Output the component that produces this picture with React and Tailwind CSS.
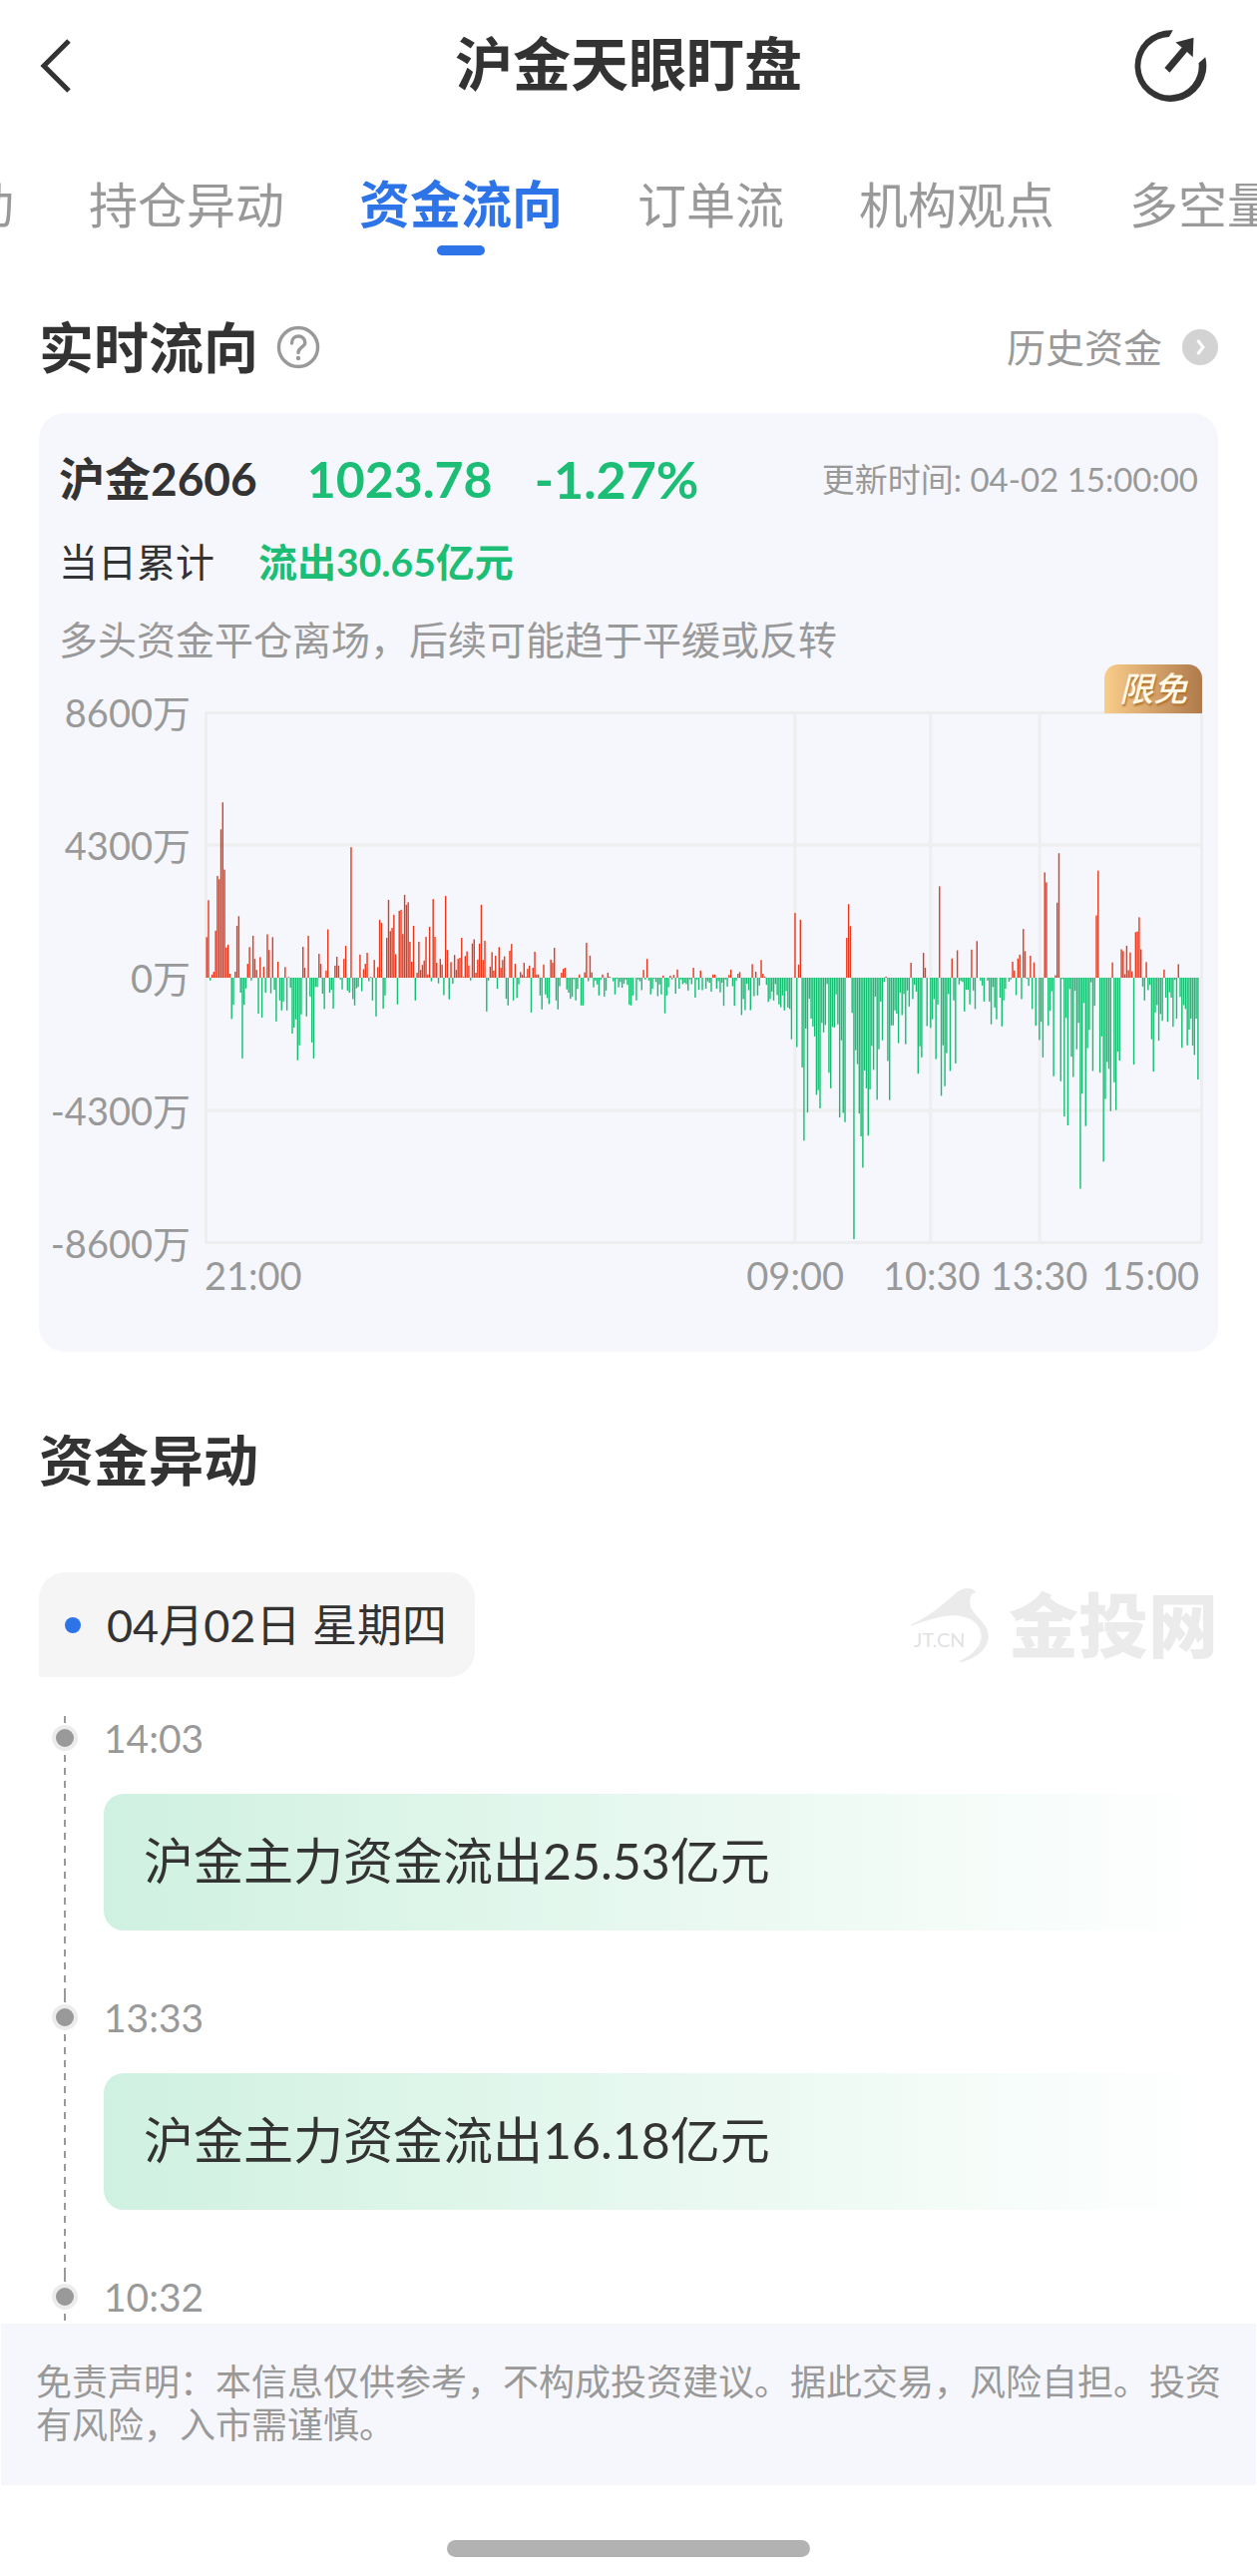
import { useState } from "react"

const tabs = ["异动", "持仓异动", "资金流向", "订单流", "机构观点", "多空量"]

const yLabels = ["8600万", "4300万", "0万", "-4300万", "-8600万"]

const events = [
  { time: "14:03", text: "沪金主力资金流出25.53亿元" },
  { time: "13:33", text: "沪金主力资金流出16.18亿元" },
  { time: "10:32", text: "" }
]

// Net flow per minute, +-746 is the full scale (8600万)
const FULL = 746
const flow = [
  114, 218, -8, 9, 17, 132, 286, 277, 417, 493, 304, 85, 93, 11, -116, -76, 17, 146, 173, -42,
  -227, -76, -30, 39, 86, -8, 118, 53, 22, -101, 58, -112, 31, -42, 122, 78, -44, 114, -34, -123,
  45, -64, -92, -67, 30, -92, 2, -28, -157, -140, -117, -232, -190, -103, 87, 28, -109, 118, -53, -182,
  -227, -26, -26, 67, 39, -45, -88, 20, 136, -42, -34, -87, 34, 59, 34, -5, -33, 53, 90, -36,
  -42, 367, -60, -78, -30, -26, 65, -38, 24, 39, 70, -10, 2, -64, 50, -109, 30, 163, 154, -87,
  -50, 112, 219, 131, 140, 177, 66, -75, 188, 191, 123, 233, 205, 212, 101, 45, 146, -64, 14, 101,
  22, 36, 48, 115, 9, 143, -10, 221, 115, 42, -16, 53, 37, -49, 230, 78, -61, 44, -17, 64,
  22, 53, 56, 112, 2, 61, 74, 34, -8, 96, 108, 14, 51, 96, 205, 50, 104, -95, -8, 31,
  72, 20, 62, -31, 86, 28, 50, 60, -59, -78, 76, 95, -64, 39, -57, -19, 16, 8, 42, 2,
  25, 34, -98, 28, 73, 9, 9, -50, -89, 37, -47, -57, -74, 51, 42, 84, -64, -89, -24, 14,
  25, 28, -33, -42, -59, -53, -4, -64, -31, 9, -78, -78, 15, 98, -10, 62, 15, -27, -8, -19,
  -50, -6, 9, -53, -36, 14, 3, 0, -10, -47, -3, -27, -12, -28, -17, -6, -20, -76, -78, -50,
  0, -64, -5, -10, -35, 22, -5, 53, -8, -47, -31, -3, -12, -52, -19, -47, 6, -100, -50, -27,
  6, -5, 8, -45, 23, -31, -5, -18, -14, -18, -36, -5, -18, 28, -56, -5, -34, 20, -35, 0,
  -31, -10, -14, -39, 9, 9, -31, -10, -41, -14, -79, -5, -25, 8, 23, -24, -79, -8, 11, 16,
  -105, -60, -91, -17, -35, -91, 38, -52, 17, -50, -22, 50, 11, 3, -20, -68, -60, -39, -64, -18,
  -49, -75, -83, -50, -92, -38, -84, -88, -173, 0, 182, -195, 37, 163, -252, -458, -143, -379, -59, -115,
  -137, -165, -329, -316, -367, -127, -154, -133, -18, -267, -311, -138, -140, -47, -131, -393, -176, -380, -406, 112,
  207, 145, -99, -735, -204, -243, -382, -446, -534, -261, -311, -444, -314, -192, -259, -53, -343, -201, -67, -176,
  -12, 3, -234, -344, -134, -134, -92, -101, -184, -42, -105, -46, -187, -36, -81, 42, -60, -20, -39, -270,
  -193, -224, 70, 28, -136, 0, -141, -117, -60, -229, -76, 257, -332, -190, -305, -212, -46, -262, 54, -64,
  -241, 77, -19, -9, -12, -95, -34, -34, -75, 79, -36, -88, 103, 0, -8, -22, -67, 0, -8, -67,
  -131, -26, -84, -117, 0, -56, -137, -64, -31, 0, -11, -5, 45, 20, -49, 54, 65, -60, 137, 75,
  -3, -23, 62, -88, 43, -135, 0, -175, -124, -224, 296, 268, -135, -93, -38, -277, 7, 211, 350, -291,
  -4, -390, -113, -415, -32, -222, -279, -37, -201, -127, -593, -326, -71, -417, -198, -147, -13, -262, -79, 175,
  301, -267, -165, -517, -341, -237, -256, -375, 43, -294, -372, -208, -233, 80, 75, 10, 90, 21, 71, 18,
  -244, 128, 130, 170, 80, -25, -64, 44, -35, -20, -173, -264, -98, -77, -177, -102, -121, 23, -56, -124,
  -41, -56, -138, -6, -115, 38, -54, -197, -77, -88, -190, -146, -115, -191, -217, -115, -286
]

function FlowChart() {

  const step = 1.789

  return (
    <svg
      viewBox="0 0 1002 534"
      preserveAspectRatio="none"
      className="block w-full h-[534px]"
      role="img"
      aria-label="实时资金流向"
    >
      {/* grid */}
      <g stroke="#eeeeee" strokeWidth="3" fill="none">
        <rect x="1.5" y="1.5" width="999" height="531" rx="1" />
        <path d="M1 134H1001M1 400H1001M592.5 1V533M728.5 1V533M838 1V533" />
      </g>
      <path d="M1 267H1001" stroke="#e6ecec" strokeWidth="1" />

      {/* bars */}
      {flow.map((value, i) => {
        const height = Math.abs(value) / FULL * 266
        return (
          <rect
            key={i}
            x={1.5 + i * step}
            y={value > 0 ? 267 - height : 267}
            width="1.4"
            height={height}
            fill={value > 0 ? "#e8371a" : "#14bd70"}
          />
        )
      })}
    </svg>
  )
}

function SiteLogo() {
  return (
    <div className="flex items-center gap-[18px] text-[#ebebeb]">
      <svg viewBox="98 85 242 235" className="w-[81px] h-[78px]" fill="currentColor">
        <path d="M101 204L100 200C150 180 192 145 238 104C260 86 286 87 298 104C281 104 275 122 281 148C292 175 335 198 335 238C331 280 290 306 248 315L247 311C290 290 311 268 313 236C311 196 280 173 222 173C180 175 140 192 101 204Z" />
        <text x="109" y="268" fontSize="60" fill="#e2e2e2">JT.CN</text>
      </svg>
      <span className="text-[70px] leading-[76px] font-black">金投网</span>
    </div>
  )
}

function TimelineItem({ time, text }) {
  return (
    <li className="flex gap-[26px] pl-[13px]">

      <div className="relative w-[26px] shrink-0 flex justify-center">
        <div className="w-[2px] bg-[repeating-linear-gradient(#999_0_7px,transparent_7px_13px)]" />
        <span className="absolute top-[9px] size-[26px] rounded-full bg-[#999] border-4 border-[#ececec]" />
      </div>

      <div className="flex-1">
        <time className="block text-[39px] leading-[44px] text-[#999] pb-[5px]">{time}</time>
        {text && (
          <p className="mt-[29px] mb-[65px] px-10 pt-[33px] pb-[35px] rounded-[20px] text-[50px] leading-[69px]
                        bg-linear-to-r from-[#cff1e1] to-white">
            {text}
          </p>
        )}
      </div>

    </li>
  )
}

function App() {

  const [active, setActive] = useState("资金流向")

  return (

    <div className="bg-white text-[#333] font-['Lato','Noto_Sans_CJK_SC',sans-serif] overflow-hidden">

      {/* Header */}
      <header className="h-[132px] px-[39px] flex items-center justify-between">
        <button aria-label="返回" className="w-[88px]">
          <svg viewBox="0 0 32 56" className="w-8 h-14" fill="none" stroke="#333" strokeWidth="5">
            <path d="M30 3L5 28L30 53" />
          </svg>
        </button>

        <h1 className="text-[58px] leading-[80px] pb-1 font-bold">沪金天眼盯盘</h1>

        <button aria-label="分享" className="w-[88px] flex justify-end pr-2">
          <svg viewBox="0 0 74 74" className="size-20">
            <path d="M39.5 3.9A33.2 33.2 0 1 0 69.6 29L63.4 34.4A27 27 0 1 1 36 10.2Z" fill="#333" />
            <path d="M58.7 10.8L42 15.2L47.8 19.8L31.8 38.8L36.5 43.2L52.6 24L58 28.8Z" fill="#333" />
          </svg>
        </button>
      </header>

      {/* Tabs */}
      <nav className="flex gap-[75px] pt-[43px] -ml-[84px] h-[124px] items-start">
        {tabs.map(tab => (
          <button
            key={tab}
            onClick={() => setActive(tab)}
            className={
              tab === active
                ? "shrink-0 flex flex-col items-center text-[51px] leading-[60px] font-bold text-[#2e74e9]"
                : "shrink-0 text-[49px] leading-[60px] text-[#999]"
            }
          >
            {tab}
            {tab === active && <span className="mt-[11px] w-12 h-[10px] rounded-full bg-[#2e74e9]" />}
          </button>
        ))}
      </nav>

      <main className="px-[39px]">

        {/* Realtime flow */}
        <div className="mt-14 mb-[30px] flex items-center justify-between">
          <div className="flex items-center gap-[18px]">
            <h2 className="text-[55px] leading-[72px] font-bold">实时流向</h2>
            <button aria-label="说明">
              <svg viewBox="0 0 44 44" className="size-11" fill="none" stroke="#999" strokeWidth="3.4">
                <circle cx="22" cy="22" r="19.5" />
                <path d="M15.5 18C15.5 8.5 29 9 28.8 17.5C28.7 22 22 22 22 27.5" strokeLinecap="round" />
                <circle cx="22" cy="33" r="2.2" fill="#999" stroke="none" />
              </svg>
            </button>
          </div>

          <a href="#history" className="flex items-center gap-5 text-[39px] leading-[50px] text-[#999]">
            历史资金
            <svg viewBox="0 0 36 36" className="size-9">
              <circle cx="18" cy="18" r="18" fill="#d3d3d3" />
              <path d="M15.5 11L21 18L15.5 25" fill="none" stroke="#fff" strokeWidth="3" />
            </svg>
          </a>
        </div>

        <section className="rounded-[26px] bg-[#f6f7fd] pt-9 pb-[57px]">

          <div className="px-5 flex items-center justify-between leading-[60px]">
            <div className="flex items-center font-bold">
              <span className="text-[46px]">沪金2606</span>
              <span className="ml-[50px] text-[50px] text-[#1bbe74]">1023.78</span>
              <span className="ml-[42px] text-[52px] text-[#1bbe74]">-1.27%</span>
            </div>
            <span className="text-[33px] text-[#999]">更新时间: 04-02 15:00:00</span>
          </div>

          <div className="mt-7 px-5 flex gap-11 text-[39px] leading-[50px]">
            <span>当日累计</span>
            <span className="font-bold text-[#1bbe74]">流出30.65亿元</span>
          </div>

          <p className="mt-7 px-5 text-[39px] leading-[50px] text-[#999]">
            多头资金平仓离场，后续可能趋于平缓或反转
          </p>

          <div className="relative mt-[29px] pl-2 pr-[15px] flex gap-[14px] text-[38px] text-[#999]">

            <div className="w-[144px] h-[570px] flex flex-col justify-between text-right leading-[38px]">
              {yLabels.map(label => <span key={label}>{label}</span>)}
            </div>

            <div className="flex-1 pt-[18px]">
              <FlowChart />
              <div className="mt-[11px] pr-1 flex leading-10">
                <span className="flex-1">21:00</span>
                <span className="mr-[39px]">09:00</span>
                <span className="mr-[10px]">10:30</span>
                <span className="mr-[14px]">13:30</span>
                <span>15:00</span>
              </div>
            </div>

            <span className="absolute right-4 -top-[29px] w-[98px] h-[49px] rounded-t-[14px] text-center
                             text-[34px] leading-[48px] font-medium italic text-[#fff8e6]
                             bg-linear-to-r from-[#f9cd8a] to-[#b07a4c]
                             [text-shadow:1px_2px_2px_#b0702a]">
              限免
            </span>

          </div>

        </section>

        {/* Flow events */}
        <h2 className="mt-[72px] text-[55px] leading-[72px] font-bold">资金异动</h2>

        <div className="mt-[77px] flex items-center justify-between">
          <div className="h-[105px] pl-[26px] pr-7 flex items-center gap-[26px] rounded-[26px] rounded-bl-none bg-[#f5f5f5]">
            <span className="size-4 rounded-full bg-[#2e74e9]" />
            <span className="text-[45px] leading-[60px]">04月02日 星期四</span>
          </div>
          <SiteLogo />
        </div>

        <ul className="mt-[39px]">
          {events.map(e => <TimelineItem key={e.time} time={e.time} text={e.text} />)}
        </ul>

      </main>

      {/* Disclaimer */}
      <footer>
        <p className="mx-px px-[35px] pt-[37px] pb-[39px] bg-[#f6f7fd] text-[36px] leading-[43px] text-[#999]">
          免责声明：本信息仅供参考，不构成投资建议。据此交易，风险自担。投资有风险，入市需谨慎。
        </p>
        <div className="mx-auto mt-[55px] mb-[19px] w-[364px] h-[17px] rounded-full bg-[#b2b2b2]" />
      </footer>

    </div>

  )
}

export default App
